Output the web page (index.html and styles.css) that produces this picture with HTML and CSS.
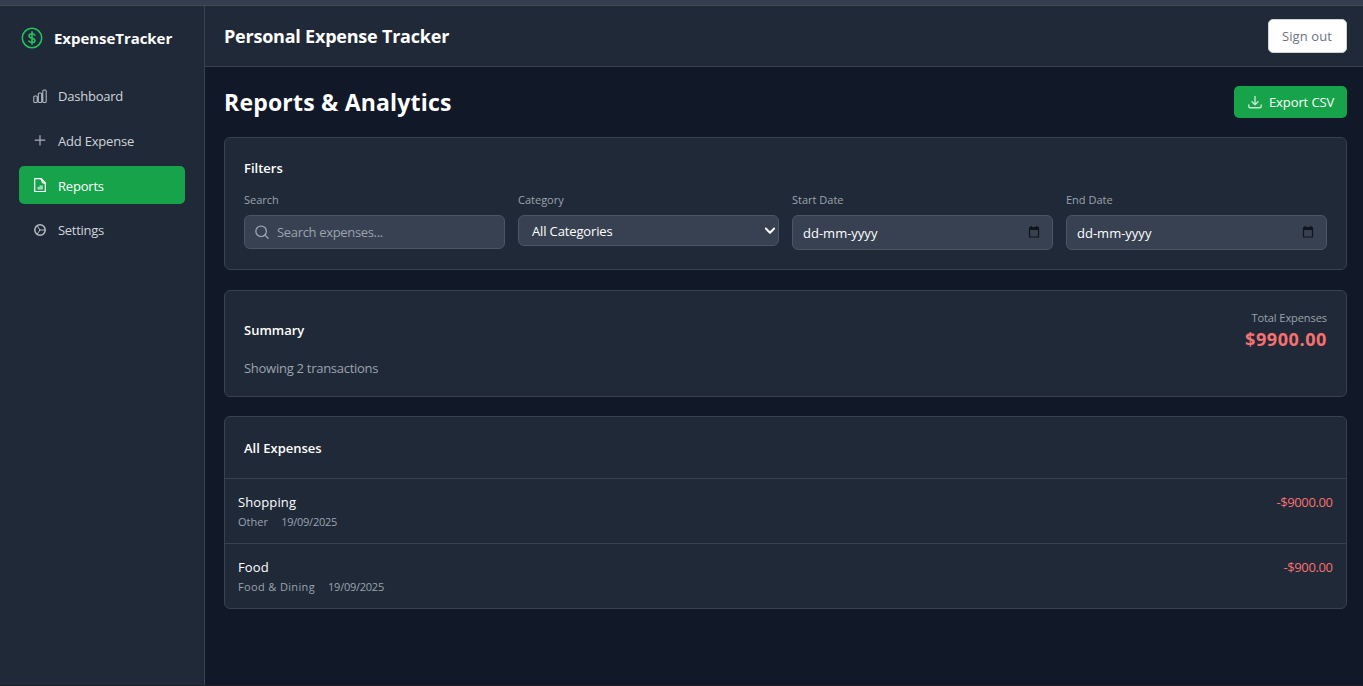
FILE: index.html
```
<!DOCTYPE html>
<html lang="en">
<head>
<meta charset="utf-8">
<title>ExpenseTracker</title>
<link rel="stylesheet" href="styles.css">
</head>
<body>
<div class="topstrip"></div>
<div class="app">
  <aside class="sidebar">
    <div class="brand">
      <svg class="brand-icon" viewBox="0 0 24 24"><circle cx="12" cy="12" r="10.6"/><path d="M12 5.300v13.400M15.200 8.900c-.7-1-1.800-1.500-3.200-1.500-1.900 0-3.200.9-3.200 2.300 0 3.300 6.400 1.600 6.400 4.900 0 1.400-1.300 2.300-3.200 2.300-1.500 0-2.700-.5-3.400-1.500"/></svg>
      <span class="t-brand">ExpenseTracker</span>
    </div>
    <nav class="nav">
      <a class="nav-item"><svg class="nav-icon bars" viewBox="0 0 14 14"><path d="M.8 8q0-1 1-1h1.400q1 0 1 1v4.500q0 1-1 1H1.800q-1 0-1-1zM5.300 5q0-1 1-1h1.400q1 0 1 1v7.500q0 1-1 1H6.300q-1 0-1-1zM9.800 2q0-1 1-1h1.400q1 0 1 1v10.500q0 1-1 1h-1.400q-1 0-1-1z"/></svg><span class="t-dashboard">Dashboard</span></a>
      <a class="nav-item"><svg class="nav-icon plus" viewBox="0 0 14 14"><path d="M7 2.500v9.500M2.200 7.200h9.600"/></svg><span class="t-add">Add Expense</span></a>
      <a class="nav-item active"><svg class="nav-icon" viewBox="0 0 14 14"><path d="M1.700.700h6.500l4.100 4v8.800H1.700zM7.500.8c2 .3 1 3 2 3.700.7.600 2.500 0 2.800 1.500"/><path class="solid soft" d="M4.500 9h2V7.500H9.800v4H4.500z"/></svg><span class="t-reports">Reports</span></a>
      <a class="nav-item"><svg class="nav-icon gear" viewBox="0 0 14 14"><circle cx="7" cy="7" r="5.200"/><path d="M6.800 7h5M6.800 7 4.300 2.800M6.800 7l-2.500 4.200"/></svg><span class="t-settings">Settings</span></a>
    </nav>
  </aside>
  <div class="main">
    <header class="header">
      <h1 class="t-app">Personal Expense Tracker</h1>
      <button class="signout"><span class="t-signout">Sign out</span></button>
    </header>
    <main class="content">
      <div class="titlebar">
        <h2 class="t-title">Reports &amp; Analytics</h2>
        <button class="export"><svg class="export-icon" viewBox="0 0 16 16"><path d="M8 2.500v8M5 7.800l3 3 3-3M1.800 11v1.500q0 1.300 1.300 1.300h9.800q1.300 0 1.300-1.300V11"/></svg><span class="t-export">Export CSV</span></button>
      </div>

      <section class="card filters">
        <h3 class="t-filters">Filters</h3>
        <div class="fields">
          <div class="field"><label class="t-lsearch">Search</label>
            <div class="control search"><svg class="search-icon" viewBox="0 0 16 16"><circle cx="6.500" cy="6.700" r="5.600"/><path d="m10.500 10.700 3.500 3.500"/></svg><span class="t-placeholder">Search expenses...</span></div></div>
          <div class="field"><label class="t-lcat">Category</label>
            <div class="control select"><span class="t-cat">All Categories</span><svg class="chevron" viewBox="0 0 10 8"><path d="m.8 1.500 4.200 4.200L9.200 1.500"/></svg></div></div>
          <div class="field"><label class="t-lstart">Start Date</label>
            <div class="control date"><span class="t-date">dd-mm-yyyy</span><svg class="calendar" viewBox="0 0 12 12"><path d="M1.500 3v8h9V3z"/><path class="solid" d="M1 1h10v3H1zM2.500 0h1.500v1H2.500zM8 0h1.500v1H8z"/></svg></div></div>
          <div class="field"><label class="t-lend">End Date</label>
            <div class="control date"><span class="t-date">dd-mm-yyyy</span><svg class="calendar" viewBox="0 0 12 12"><path d="M1.500 3v8h9V3z"/><path class="solid" d="M1 1h10v3H1zM2.500 0h1.500v1H2.500zM8 0h1.500v1H8z"/></svg></div></div>
        </div>
      </section>

      <section class="card summary">
        <div class="summary-left"><h3 class="t-summary">Summary</h3><p class="t-showing">Showing 2 transactions</p></div>
        <div class="summary-right"><p class="t-total">Total Expenses</p><p class="t-amount">$9900.00</p></div>
      </section>

      <section class="card list">
        <div class="list-head"><h3 class="t-all">All Expenses</h3></div>
        <div class="row">
          <div><p class="name t-shopping">Shopping</p><p class="meta"><span class="t-other">Other</span><span class="t-day">19/09/2025</span></p></div>
          <span class="cost">-$9000.00</span>
        </div>
        <div class="row">
          <div><p class="name t-food">Food</p><p class="meta"><span class="t-dining">Food &amp; Dining</span><span class="t-day">19/09/2025</span></p></div>
          <span class="cost">-$900.00</span>
        </div>
      </section>
    </main>
  </div>
</div>
</body>
</html>
```
FILE: styles.css
```
* { box-sizing: border-box; }
body { margin: 0; height: 686px; overflow: hidden; display: flex; flex-direction: column; background: #111827; color: #fff; font: 13px/20px "Open Sans", "Noto Sans", sans-serif; border-bottom: 1px solid #1d1e28; }
h1, h2, h3, p { margin: 0; white-space: nowrap; }
span, label { white-space: nowrap; }
button { border: 0; font: inherit; color: inherit; }
svg { flex: none; fill: none; stroke: currentColor; stroke-width: 1.2; stroke-linecap: round; stroke-linejoin: round; }
.solid { fill: currentColor; stroke: none; }
.soft { opacity: .6; }
.topstrip { flex: none; height: 6px; background: #343e50; border-bottom: 1px solid #444b50; }
.app { flex: 1; display: flex; min-height: 0; }
.sidebar { width: 205px; flex: none; background: #1f2937; border-right: 1px solid #374151; }
.brand { height: 64px; padding-left: 21px; display: flex; align-items: center; gap: 11px; }
.brand-icon { width: 22px; height: 22px; color: #22c55e; stroke-width: 1.7; }
.nav { padding: 7px 19px 0; display: flex; flex-direction: column; gap: 6.6px; }
.nav-item { height: 38px; padding-left: 14px; border-radius: 5px; display: flex; align-items: center; gap: 11px; color: #d1d5db; }
.nav-item.active { background: #16a34a; color: #fff; }
.nav-icon { width: 14px; height: 14px; margin-top: -1px; }
.bars { stroke-width: 1.1; color: #b0b5bd; }
.plus { color: #a9aeb7; }
.gear { stroke-width: 1.5; color: #b8bdc5; margin-top: 0; }
.gear path { stroke-width: 1; }
.main { flex: 1; min-width: 0; }
.header { height: 61px; background: #1f2937; border-bottom: 1px solid #374151; display: flex; align-items: center; justify-content: space-between; padding: 0 16px 0 19px; }
.signout { width: 79px; height: 34px; padding: 0 0 0 13px; text-align: left; background: #fff; color: #6b7280; border: 1px solid #d1d5db; border-radius: 5px; }
.content { padding: 19px 16px 0 19px; }
.titlebar { height: 32px; display: flex; align-items: center; justify-content: space-between; }
.export { width: 113px; height: 32px; background: #16a34a; border-radius: 5px; padding: 0 0 0 13px; display: flex; align-items: center; gap: 6px; }
.export-icon { width: 16px; height: 16px; stroke-width: 1.4; color: #c5e8d1; }
.card { background: #1f2937; border: 1px solid #374151; border-radius: 6px; }
.filters { height: 133px; margin-top: 19px; padding: 20px 19px 0; }
.fields { display: grid; grid-template-columns: repeat(4, 1fr); column-gap: 13px; margin-top: 14px; }
.field { display: flex; flex-direction: column; }
.field label { height: 16px; margin-bottom: 7px; color: #9ca3af; font-size: 11px; line-height: 16px; }
.control { display: flex; align-items: center; background: #374151; border: 1px solid #4b5563; border-radius: 6px; }
.search { height: 34px; padding-left: 10px; gap: 7px; color: #9ca3af; }
.search-icon { width: 15px; height: 15px; stroke-width: 1.4; }
.select { height: 31px; padding: 0 3px 0 13px; justify-content: space-between; }
.chevron { width: 10px; height: 8px; stroke-width: 2; }
.date { height: 35px; padding: 1px 12px 0 10px; justify-content: space-between; }
.calendar { width: 12px; height: 12px; color: #111418; margin-top: -3px; }
.summary { height: 107px; margin-top: 20px; padding: 17px 19px 0; display: flex; justify-content: space-between; }
.summary-left { padding-top: 12px; }
.t-showing { margin-top: 18px; color: #9ca3af; letter-spacing: -0.27px; }
.summary-right { display: flex; flex-direction: column; align-items: flex-end; }
.t-total { font-size: 11px; color: #9ca3af; letter-spacing: -0.07px; }
.t-amount { font-size: 18px; line-height: 24px; margin-top: -1px; font-weight: 700; letter-spacing: 0.6px; color: #f87171; }
.list { height: 193px; margin-top: 19px; }
.list-head { height: 61px; padding: 1px 19px 0; display: flex; align-items: center; }
.row { height: 65px; border-top: 1px solid #374151; padding: 13px 13px 0; display: flex; justify-content: space-between; }
.meta { display: flex; gap: 13px; color: #9ca3af; font-size: 11px; }
.cost { color: #f87171; letter-spacing: -0.38px; margin-right: 0.4px; }
h3 { font-size: 13px; line-height: 20px; font-weight: 600; }
.t-brand { font-size: 15px; font-weight: 700; letter-spacing: -0.05px; }
.t-app { font-size: 18px; font-weight: 700; line-height: 26px; letter-spacing: -0.22px; }
.t-title { font-size: 23px; font-weight: 700; line-height: 30px; letter-spacing: 0.2px; }
.t-dashboard { letter-spacing: -0.22px; }
.t-add { letter-spacing: -0.2px; }
.t-reports { letter-spacing: -0.2px; padding-top: 1px; }
.t-settings { letter-spacing: -0.3px; }
.t-signout { letter-spacing: 0.1px; }
.t-export { letter-spacing: -0.1px; }
.t-placeholder { letter-spacing: -0.33px; }
.t-cat { letter-spacing: -0.14px; }
.t-day { letter-spacing: -0.25px; }
.t-other { letter-spacing: 0.05px; }
.t-dining { letter-spacing: 0.36px; }
.t-shopping, .t-food { letter-spacing: 0.12px; }
```
